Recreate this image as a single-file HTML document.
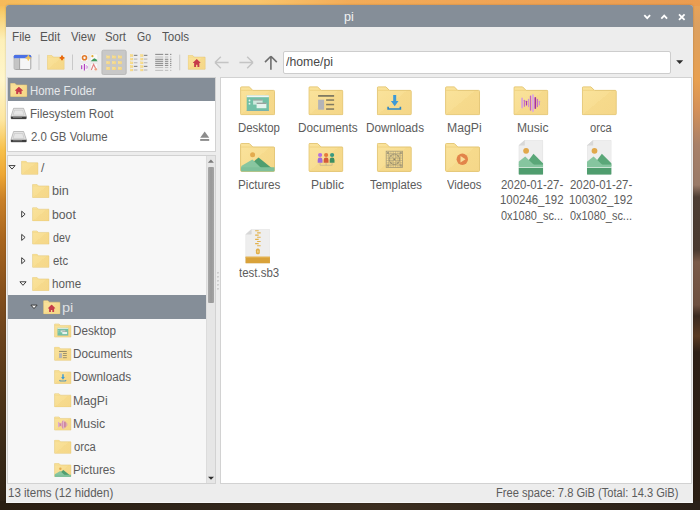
<!DOCTYPE html>
<html><head><meta charset="utf-8">
<style>
*{margin:0;padding:0;box-sizing:border-box}
html,body{width:700px;height:510px;overflow:hidden}
body{position:relative;font-family:"Liberation Sans",sans-serif;font-size:12px;color:#4a4a4a;background:#2a1e16}
.a{position:absolute}
.t{position:absolute;white-space:nowrap;line-height:1}
svg{position:absolute;overflow:visible}
#bg{position:absolute;left:0;top:0;width:700px;height:510px;background:#2c2117}
#bgL{position:absolute;left:0;top:0;width:8px;height:510px;background:linear-gradient(180deg,#f2b04e 0px,#f8cc6a 12px,#fdf0b8 40px,#fff6cc 80px,#fde6a0 120px,#f7c04a 150px,#eda633 175px,#c98028 200px,#a8651e 240px,#86501c 290px,#6a421c 340px,#4e3418 400px,#3a2a18 450px,#2c2014 510px)}
#bgR{position:absolute;left:692px;top:0;width:8px;height:510px;background:linear-gradient(180deg,#eda455 0px,#dca060 25px,#e8a050 80px,#d49058 110px,#a88068 145px,#9a7a68 185px,#4e3e34 197px,#4a3a30 250px,#7a5a48 262px,#6e5040 305px,#3a2a20 316px,#5a3a22 336px,#2e2016 352px,#2a1e14 510px)}
#bgT{position:absolute;left:0;top:0;width:700px;height:6px;background:linear-gradient(90deg,#f6ba5a 0px,#fac76c 150px,#f9c46a 260px,#f3ac58 350px,#f0a455 500px,#eb9c50 700px)}
#bgB{position:absolute;left:0;top:501px;width:700px;height:9px;background:linear-gradient(90deg,#2a1e12 0px,#30251a 200px,#3c2e20 380px,#34281c 500px,#2a2018 700px)}
#win{position:absolute;left:6px;top:5px;width:687px;height:497.7px;border-bottom:1px solid #f6f6f6;background:#ededed;border-radius:3px 3px 0 0;overflow:hidden;box-shadow:0 0 2px rgba(0,0,0,.25)}
#title{position:absolute;left:6px;top:5px;width:687px;height:22px;background:#858e98;border-radius:3px 3px 0 0}
.menu{font-size:13px;color:#3e3e3e;top:31px;letter-spacing:-0.3px}
.sep{position:absolute;width:1px;background:#c4c4c4}
#places{position:absolute;left:7px;top:77px;width:209px;height:75px;background:#fff;border:1px solid #d2d2d2}
#tree{position:absolute;left:7px;top:155px;width:209px;height:329px;background:#f7f7f7;border:1px solid #d2d2d2}
#files{position:absolute;left:220px;top:77px;width:472px;height:407px;background:#fff;border:1px solid #d2d2d2}
.pl{font-size:12.5px;color:#454545;letter-spacing:-0.2px}
.tr{font-size:12.5px;color:#454545;letter-spacing:-0.2px}
.fl{font-size:12.5px;color:#4a4a4a;letter-spacing:-0.35px;text-align:center;width:68px}
.st{font-size:12.5px;color:#454545;letter-spacing:-0.2px;top:487px}
</style></head><body>
<div id="bg"></div><div id="bgL"></div><div id="bgR"></div><div id="bgT"></div><div id="bgB"></div>
<div id="win"></div>
<div id="title"></div>
<!-- window buttons -->
<svg style="left:0;top:0" width="700" height="30">
 <path d="M644.3 15.2l2.9 3 2.9-3" fill="none" stroke="#fff" stroke-width="1.8"/>
 <path d="M661.3 18.6l2.9-3 2.9 3" fill="none" stroke="#fff" stroke-width="1.8"/>
 <path d="M679 14.3l5.6 5.6M684.6 14.3l-5.6 5.6" fill="none" stroke="#fff" stroke-width="1.8"/>
</svg>
<!-- menu -->

<svg width="0" height="0" style="position:absolute">
 <defs>
  <linearGradient id="fg" x1="0" y1="0" x2="1" y2="1">
   <stop offset="0" stop-color="#fae39c"/><stop offset="0.5" stop-color="#f8de93"/><stop offset="0.5" stop-color="#f6da8c"/><stop offset="1" stop-color="#f5d789"/>
  </linearGradient>
  <symbol id="folder" viewBox="0 0 35 29">
   <path d="M1.5 .5h7.6l3.6 3.6h20.8a1 1 0 0 1 1 1v22.4a1 1 0 0 1-1 1H1.5a1 1 0 0 1-1-1V1.5a1 1 0 0 1 1-1z" fill="url(#fg)" stroke="#e3c573" stroke-width="1"/>
   <path d="M1 4.1h11.7" stroke="#efd07e" stroke-width=".8"/>
  </symbol>
  <symbol id="house" viewBox="0 0 10 10" preserveAspectRatio="none">
   <path d="M5 0L-.3 5.1h2V10h2.4V7.2h1.8V10h2.4V5.1h2z" fill="#c63c4a"/>
  </symbol>

  <symbol id="ov_desktop" viewBox="0 0 35 29">
   <rect x="6.6" y="9" width="22.2" height="15.3" fill="#73c0a6"/>
   <rect x="6.6" y="9" width="22.2" height="1.9" fill="#f2f6f4"/>
   <circle cx="9.4" cy="14.2" r=".9" fill="#e8f4ee"/><circle cx="9.4" cy="17.4" r=".9" fill="#e8f4ee"/>
   <rect x="13" y="13.3" width="9.5" height="5" fill="#cfe9de"/><rect x="13" y="13.3" width="9.5" height=".8" fill="#808080"/>
   <rect x="16.5" y="16.5" width="9.8" height="5.4" fill="#e6f4ee"/><rect x="16.5" y="16.5" width="9.8" height=".8" fill="#6a6a6a"/>
   <rect x="6.6" y="23.8" width="22.2" height=".5" fill="#4a9ac0"/>
  </symbol>
  <symbol id="ov_documents" viewBox="0 0 35 29">
   <rect x="9.7" y="8.7" width="16" height="1.8" fill="#807a62"/>
   <rect x="9.7" y="13.4" width="6" height="10" fill="#b3b4b8"/>
   <rect x="17.7" y="13" width="8" height="1.5" fill="#807a62"/>
   <rect x="17.7" y="17.5" width="8" height="1.5" fill="#807a62"/>
   <rect x="17.7" y="22" width="8" height="1.5" fill="#807a62"/>
  </symbol>
  <symbol id="ov_downloads" viewBox="0 0 35 29">
   <path d="M16.4 8.7h3v6h2.3l-3.8 5.2-3.8-5.2h2.3z" fill="#3d9ad6"/>
   <path d="M11.3 20.5v2.2h12.3v-2.2" fill="none" stroke="#2a86c6" stroke-width="1.6"/>
  </symbol>
  <symbol id="ov_music" viewBox="0 0 35 29">
   <g stroke-linecap="round">
   <path d="M8.7 12.2v9" stroke="#d8a2d8" stroke-width="1.8"/>
   <path d="M11 14v5.9" stroke="#c270c8" stroke-width="1.3"/>
   <path d="M13.1 15v3.6" stroke="#ad3cad" stroke-width="1.3"/>
   <path d="M15.1 13.1v7.2" stroke="#d090d8" stroke-width="1.2"/>
   <path d="M17.1 9.8v13.9" stroke="#c262c2" stroke-width="1.3"/>
   <path d="M19.5 9v15.6" stroke="#dcaadc" stroke-width="2.1"/>
   <path d="M21.9 11.5v10.4" stroke="#a62ea6" stroke-width="1.6"/>
   <path d="M24 13.1v7.2" stroke="#c270c8" stroke-width="1.3"/>
   <path d="M26 15v3.5" stroke="#d090d8" stroke-width="1.2"/>
   </g>
  </symbol>
  <symbol id="ov_pictures" viewBox="0 0 35 29">
   <circle cx="12.5" cy="11.9" r="2.5" fill="#e3ab4e"/>
   <path d="M18.5 14.6L31.5 25H6z" fill="#4f9e70"/>
   <path d="M12.3 16.6L21 25H1.2v-2z" fill="#88c6a0"/>
   <path d="M.8 24.3h33.6v3.4a1 1 0 0 1-1 1H1.8a1 1 0 0 1-1-1z" fill="#7ec09a"/>
  </symbol>
  <symbol id="ov_public" viewBox="0 0 35 29">
   <path d="M11.7 19.8v2.6h12v-2.6M17.7 19.8v2.6" fill="none" stroke="#bfb290" stroke-width=".7"/>
   <circle cx="11.7" cy="12.1" r="2.1" fill="#b46ee0"/><path d="M9.3 19.9v-2.8a2.4 2.4 0 0 1 4.8 0v2.8z" fill="#a06ad8"/>
   <circle cx="17.7" cy="12.1" r="2.1" fill="#e67a3a"/><path d="M15.3 19.9v-2.8a2.4 2.4 0 0 1 4.8 0v2.8z" fill="#d45a38"/>
   <circle cx="23.7" cy="12.1" r="2.1" fill="#3a9a80"/><path d="M21.3 19.9v-2.8a2.4 2.4 0 0 1 4.8 0v2.8z" fill="#3d8e60"/>
  </symbol>
  <symbol id="ov_templates" viewBox="0 0 35 29">
   <g opacity=".75">
   <rect x="9.4" y="8.3" width="16.4" height="16.2" fill="none" stroke="#8a8470" stroke-width=".8"/>
   <path d="M11.8 8.3v16.2M14.1 8.3v16.2M16.4 8.3v16.2M18.8 8.3v16.2M21.1 8.3v16.2M23.4 8.3v16.2M9.4 10.6h16.4M9.4 12.9h16.4M9.4 15.2h16.4M9.4 17.6h16.4M9.4 19.9h16.4M9.4 22.2h16.4" stroke="#8f8a74" stroke-width=".55"/>
   <circle cx="17.6" cy="16.4" r="5.2" fill="none" stroke="#7a7562" stroke-width=".9"/>
   <path d="M9.6 8.5l16 15.8M25.6 8.5L9.6 24.3" stroke="#8a8470" stroke-width=".5"/>
   <circle cx="17.6" cy="16.4" r=".9" fill="#6a6552"/>
   <rect x="10.3" y="9.2" width="2" height="2" fill="#8a8470"/><rect x="22.9" y="9.2" width="2" height="2" fill="#8a8470"/>
   <rect x="10.3" y="21.5" width="2" height="2" fill="#8a8470"/><rect x="22.9" y="21.5" width="2" height="2" fill="#8a8470"/>
   </g>
  </symbol>
  <symbol id="ov_videos" viewBox="0 0 35 29">
   <circle cx="17.2" cy="16.4" r="5.7" fill="#e2844a"/>
   <path d="M15.4 13.2v6.4l5-3.2z" fill="#f8dd9a"/>
  </symbol>
  <symbol id="imgfile" viewBox="0 0 24.7 34.8">
   <path d="M6.3 .25H24a.45.45 0 0 1 .45.45v33.4a.45.45 0 0 1-.45.45H.7a.45.45 0 0 1-.45-.45V5.6z" fill="#eeeeee" stroke="#dcdcdc" stroke-width=".5"/>
   <path d="M6.3 0v4.9a.7.7 0 0 1-.7.7H0z" fill="#d8d8d8"/>
   <circle cx="7.6" cy="10.8" r="2.9" fill="#e1a84b"/>
   <path d="M15 13.8l9.7 9.6v2.4H6z" fill="#5aa778"/>
   <path d="M6.7 16.4L15.6 25H0v-3.3z" fill="#86c59f"/>
   <rect x="0" y="24.6" width="24.7" height="2.6" fill="#86c59f"/>
   <rect x="0" y="27.2" width="24.7" height=".8" fill="#c6e4d0"/>
   <path d="M0 28h24.7v6.1a.7.7 0 0 1-.7.7H.7a.7.7 0 0 1-.7-.7z" fill="#4f9d6e"/>
  </symbol>
  <symbol id="zipfile" viewBox="0 0 24.7 34.8">
   <path d="M6.3 .25H24a.45.45 0 0 1 .45.45v33.4a.45.45 0 0 1-.45.45H.7a.45.45 0 0 1-.45-.45V5.6z" fill="#eeeeee" stroke="#dedede" stroke-width=".5"/>
   <path d="M6.3 .25v4.7a.7.7 0 0 1-.7.7H.25z" fill="#d6d6d6"/>
   <path d="M0 27.9h24.7v6.2a.7.7 0 0 1-.7.7H.7a.7.7 0 0 1-.7-.7z" fill="#d9a23a"/>
   <rect x="0" y="27.9" width="24.7" height="1" fill="#e6b652"/>
   <path d="M9.8 1.90h3.6M11.8 4.05h3.6M9.8 6.20h3.6M11.8 8.35h3.6M9.8 10.50h3.6M11.8 12.65h3.6M9.8 14.80h3.6M11.8 16.95h3.6" stroke="#e2b24e" stroke-width="1.15"/>
   <rect x="10.6" y="19.7" width="3.9" height="5.8" rx="1.6" fill="#e0ae48"/>
   <rect x="11.8" y="21.6" width="1.5" height="2.2" fill="#f2d48a"/>
  </symbol>
 </defs>
</svg>

<!-- toolbar -->
<svg style="left:0;top:48px" width="700" height="30">
 <!-- new window icon 14-31.4, 55-69.7 -->
 <g transform="translate(0,-48)">
  <rect x="14.2" y="55.2" width="16.6" height="14.3" rx="1.3" fill="#f6f6f6" stroke="#9c9c9c" stroke-width=".9"/>
  <rect x="14.6" y="58.2" width="4.9" height="10.9" fill="#c4c4c4"/>
  <path d="M19.6 58.2v10.9" stroke="#9a9a9a" stroke-width=".9"/>
  <path d="M13.8 58.2v-1.9a1.4 1.4 0 0 1 1.4-1.4h14.6a1.4 1.4 0 0 1 1.4 1.4v1.9z" fill="#4a70e6"/>
  <path d="M28.3 55.1l.9 1.9 1.9.9-1.9.9-.9 1.9-.9-1.9-1.9-.9 1.9-.9z" fill="#f2c55a" stroke="#f2c55a" stroke-width=".6" stroke-linejoin="round"/>
  <rect x="38.5" y="54.5" width="1" height="15.5" fill="#c9c9c9"/>
  <use href="#folder" x="47" y="55" width="17.6" height="14.7"/>
  <path d="M62 55.6v4.6M59.7 57.9h4.6" stroke="#e8680e" stroke-width="1.9"/>
  <rect x="72" y="54.5" width="1" height="15.5" fill="#c9c9c9"/>
  <!-- small icons grid -->
  <rect x="80.6" y="54" width="7.4" height="7.6" rx="1.2" fill="#f9f9f9" stroke="#e2e2e2" stroke-width=".5"/>
  <circle cx="84.5" cy="57.8" r="2" fill="none" stroke="#e27a2a" stroke-width="1.6"/>
  <rect x="90.3" y="54" width="7.4" height="7.6" rx="1.2" fill="#f9f9f9" stroke="#e2e2e2" stroke-width=".5"/>
  <circle cx="92.4" cy="56.2" r="1.1" fill="#e2aa30"/>
  <path d="M90.7 61.3l2.4-2.2 1.4-.9 1.6 1 1.5 2.1z" fill="#3f9a5e"/>
  <rect x="80.6" y="63.4" width="7.4" height="7.4" rx="1.2" fill="#f9f9f9" stroke="#e2e2e2" stroke-width=".5"/>
  <path d="M81.7 65.2v4M84.4 63.9v6.6" stroke="#b040c0" stroke-width="1.2"/>
  <path d="M86.2 65v4.2M87.4 66v2.4" stroke="#d8a0e0" stroke-width="1"/>
  <rect x="90.3" y="63.4" width="7.4" height="7.4" rx="1.2" fill="#f9f9f9" stroke="#e2e2e2" stroke-width=".5"/>
  <path d="M91.3 70l2.3-5.6 2.3 4.6" fill="none" stroke="#e08080" stroke-width="1.1"/>
  <circle cx="95.8" cy="69.3" r="1.3" fill="#f0a080"/>
  <!-- pressed -->
  <rect x="101.9" y="50.2" width="24.3" height="24.3" rx="1.5" fill="#c8c8c8" stroke="#b4b4b4" stroke-width=".8"/>
 </g>
</svg>

<svg style="left:0;top:0" width="700" height="80">
  <!-- 3x3 grid icons -->
  <g id="g9"><use href="#folder" x="106.1" y="54.8" width="4.1" height="4.1" preserveAspectRatio="none"/><use href="#folder" x="112.0" y="54.8" width="4.1" height="4.1" preserveAspectRatio="none"/><use href="#folder" x="117.9" y="54.8" width="4.1" height="4.1" preserveAspectRatio="none"/><use href="#folder" x="106.1" y="60.5" width="4.1" height="4.1" preserveAspectRatio="none"/><use href="#folder" x="112.0" y="60.5" width="4.1" height="4.1" preserveAspectRatio="none"/><use href="#folder" x="117.9" y="60.5" width="4.1" height="4.1" preserveAspectRatio="none"/><use href="#folder" x="106.1" y="66.2" width="4.1" height="4.1" preserveAspectRatio="none"/><use href="#folder" x="112.0" y="66.2" width="4.1" height="4.1" preserveAspectRatio="none"/><use href="#folder" x="117.9" y="66.2" width="4.1" height="4.1" preserveAspectRatio="none"/></g>
  <!-- compact list -->
  <use href="#folder" x="129.9" y="53.8" width="3.4" height="3.1"/>
  <rect x="133.9" y="54.8" width="3.5" height="1.2" fill="#8c8c8c"/>
  <use href="#folder" x="129.9" y="57.5" width="3.4" height="3.1"/>
  <rect x="133.9" y="58.5" width="3.5" height="1.2" fill="#bdbdbd"/>
  <use href="#folder" x="129.9" y="61.1" width="3.4" height="3.1"/>
  <rect x="133.9" y="62.1" width="3.5" height="1.2" fill="#bdbdbd"/>
  <use href="#folder" x="129.9" y="64.8" width="3.4" height="3.1"/>
  <rect x="133.9" y="65.8" width="3.5" height="1.2" fill="#8c8c8c"/>
  <use href="#folder" x="129.9" y="68.4" width="3.4" height="3.1"/>
  <rect x="133.9" y="69.4" width="3.5" height="1.2" fill="#bdbdbd"/>
  <use href="#folder" x="140.1" y="53.8" width="3.4" height="3.1"/>
  <rect x="143.9" y="54.8" width="3.5" height="1.2" fill="#8c8c8c"/>
  <use href="#folder" x="140.1" y="57.5" width="3.4" height="3.1"/>
  <rect x="143.9" y="58.5" width="3.5" height="1.2" fill="#bdbdbd"/>
  <use href="#folder" x="140.1" y="61.1" width="3.4" height="3.1"/>
  <rect x="143.9" y="62.1" width="3.5" height="1.2" fill="#bdbdbd"/>
  <use href="#folder" x="140.1" y="64.8" width="3.4" height="3.1"/>
  <rect x="143.9" y="65.8" width="3.5" height="1.2" fill="#8c8c8c"/>
  <use href="#folder" x="140.1" y="68.4" width="3.4" height="3.1"/>
  <rect x="143.9" y="69.4" width="3.5" height="1.2" fill="#bdbdbd"/>
  <!-- detailed list -->
  <rect x="155.2" y="53.85" width="8" height="1.1" fill="#8e8e8e"/><rect x="164.9" y="53.85" width="3.4" height="1.1" fill="#8e8e8e"/><rect x="170" y="53.85" width="1.4" height="1.1" fill="#8e8e8e"/>
  <rect x="155.2" y="56.45" width="8" height="1.1" fill="#c2c2c2"/><rect x="164.9" y="56.45" width="3.4" height="1.1" fill="#c2c2c2"/><rect x="170" y="56.45" width="1.4" height="1.1" fill="#c2c2c2"/>
  <rect x="155.2" y="58.75" width="8" height="1.1" fill="#8e8e8e"/><rect x="164.9" y="58.75" width="3.4" height="1.1" fill="#8e8e8e"/><rect x="170" y="58.75" width="1.4" height="1.1" fill="#8e8e8e"/>
  <rect x="155.2" y="60.75" width="8" height="1.1" fill="#8e8e8e"/><rect x="164.9" y="60.75" width="3.4" height="1.1" fill="#8e8e8e"/><rect x="170" y="60.75" width="1.4" height="1.1" fill="#8e8e8e"/>
  <rect x="155.2" y="62.85" width="8" height="1.1" fill="#8e8e8e"/><rect x="164.9" y="62.85" width="3.4" height="1.1" fill="#8e8e8e"/><rect x="170" y="62.85" width="1.4" height="1.1" fill="#8e8e8e"/>
  <rect x="155.2" y="64.85" width="8" height="1.1" fill="#8e8e8e"/><rect x="164.9" y="64.85" width="3.4" height="1.1" fill="#8e8e8e"/><rect x="170" y="64.85" width="1.4" height="1.1" fill="#8e8e8e"/>
  <rect x="155.2" y="66.95" width="8" height="1.1" fill="#c2c2c2"/><rect x="164.9" y="66.95" width="3.4" height="1.1" fill="#c2c2c2"/><rect x="170" y="66.95" width="1.4" height="1.1" fill="#c2c2c2"/>
  <rect x="155.2" y="69.85" width="8" height="1.1" fill="#c2c2c2"/><rect x="164.9" y="69.85" width="3.4" height="1.1" fill="#c2c2c2"/><rect x="170" y="69.85" width="1.4" height="1.1" fill="#c2c2c2"/>
  <rect x="179.2" y="54.6" width="1" height="15.7" fill="#c9c9c9"/>
  <use href="#folder" x="187.7" y="55" width="18" height="14.7"/>
  <use href="#house" x="192.8" y="59.1" width="7.9" height="7.8"/>
  <!-- back/forward/up -->
  <path d="M215 62.5h13.6M215 62.5l5.8-5.8M215 62.5l5.8 5.8" fill="none" stroke="#c4c4c4" stroke-width="1.5"/>
  <path d="M253 62.5h-13.6M253 62.5l-5.8-5.8M253 62.5l-5.8 5.8" fill="none" stroke="#c4c4c4" stroke-width="1.5"/>
  <path d="M270.9 56.2v13.5M270.9 56.2l-5.9 5.9M270.9 56.2l5.9 5.9" fill="none" stroke="#6e6e6e" stroke-width="1.6"/>
  <!-- address -->
  <rect x="283.5" y="51.5" width="387" height="22" rx="1.5" fill="#fff" stroke="#cdcdcd" stroke-width="1"/>
  <path d="M676.2 60.3h7l-3.5 3.7z" fill="#2d2d2d"/>
</svg>

<div id="places"></div>
<div class="a" style="left:8px;top:78px;width:207px;height:23.3px;background:#858e98"></div>
<svg style="left:0;top:0" width="220" height="160">
  <use href="#folder" x="10" y="82.9" width="17.5" height="14"/>
  <use href="#house" x="14.8" y="86.8" width="8.2" height="7.5"/>
  <g id="drive">
   <path d="M13.6 108.3h10l2.9 8.5v1.3a.8.8 0 0 1-.8.8H11.7a.8.8 0 0 1-.8-.8v-1.3z" fill="#e6e6e6" stroke="#9a9a9a" stroke-width=".6"/>
   <path d="M14.6 110.2h8l1.6 5H13z" fill="none" stroke="#b8b8b8" stroke-width=".5"/>
   <path d="M11 116.6h15.4v1.6a.7.7 0 0 1-.7.7H11.7a.7.7 0 0 1-.7-.7z" fill="#3e3e3e"/>
   <path d="M13 117.3h9v.7h-9z" fill="#8a8a8a"/>
  </g>
  <use href="#drive" y="23.2"/>
  <path d="M200.2 137.8l4.5-6.3 4.5 6.3z" fill="#8c8c8c"/>
  <rect x="200.2" y="139" width="9" height="1.9" fill="#8c8c8c"/>
</svg>

<div id="tree"></div>
<div class="a" style="left:8px;top:295.3px;width:198px;height:23.4px;background:#858e98"></div>
<div class="a" style="left:206px;top:156px;width:9px;height:327px;background:#e6e6e6;border-left:1px solid #dcdcdc"></div>
<div class="a" style="left:208.2px;top:167px;width:5.6px;height:135.7px;background:linear-gradient(90deg,#a8a8a8,#999 50%,#a4a4a4);border-radius:1px"></div>
<svg style="left:0;top:0" width="220" height="490">
  <path d="M207.9 162.7l3-3.3 3 3.3z" fill="#7a7a7a"/>
  <path d="M208 476.7h6l-3 3.1z" fill="#2e2e2e"/>

<path d="M8.9 165.6h6.2l-3.1 3.5z" fill="#fff" stroke="#333" stroke-width=".95" stroke-linejoin="round"/>
<use href="#folder" x="21" y="160.70" width="17.6" height="14.1"/>
<use href="#folder" x="32" y="183.95" width="17.6" height="14.1"/>
<path d="M21.7 211.2v6l3.4-3z" fill="#fff" stroke="#333" stroke-width=".95" stroke-linejoin="round"/>
<use href="#folder" x="32" y="207.20" width="17.6" height="14.1"/>
<path d="M21.7 234.4v6l3.4-3z" fill="#fff" stroke="#333" stroke-width=".95" stroke-linejoin="round"/>
<use href="#folder" x="32" y="230.45" width="17.6" height="14.1"/>
<path d="M21.7 257.7v6l3.4-3z" fill="#fff" stroke="#333" stroke-width=".95" stroke-linejoin="round"/>
<use href="#folder" x="32" y="253.70" width="17.6" height="14.1"/>
<path d="M19.9 281.8h6.2l-3.1 3.5z" fill="#fff" stroke="#333" stroke-width=".95" stroke-linejoin="round"/>
<use href="#folder" x="32" y="276.95" width="17.6" height="14.1"/>
<path d="M30.9 305.1h6.2l-3.1 3.5z" fill="#fff" stroke="#333" stroke-width=".95" stroke-linejoin="round"/>
<use href="#folder" x="43" y="300.20" width="17.6" height="14.1"/>
<use href="#house" x="47.8" y="304.50" width="7.6" height="7.6"/>
<use href="#folder" x="54" y="323.45" width="17.6" height="14.1"/>
<use href="#ov_desktop" x="54" y="323.45" width="17.6" height="14.1"/>
<use href="#folder" x="54" y="346.70" width="17.6" height="14.1"/>
<use href="#ov_documents" x="54" y="346.70" width="17.6" height="14.1"/>
<use href="#folder" x="54" y="369.95" width="17.6" height="14.1"/>
<use href="#ov_downloads" x="54" y="369.95" width="17.6" height="14.1"/>
<use href="#folder" x="54" y="393.20" width="17.6" height="14.1"/>
<use href="#folder" x="54" y="416.45" width="17.6" height="14.1"/>
<use href="#ov_music" x="54" y="416.45" width="17.6" height="14.1"/>
<use href="#folder" x="54" y="439.70" width="17.6" height="14.1"/>
<use href="#folder" x="54" y="462.95" width="17.6" height="14.1"/>
<use href="#ov_pictures" x="54" y="462.95" width="17.6" height="14.1"/>
</svg>
<div id="files"></div>
<svg style="left:0;top:0" width="700" height="300">
<use href="#folder" x="240.1" y="86.3" width="35" height="29"/>
<use href="#ov_desktop" x="240.1" y="86.3" width="35" height="29"/>
<use href="#folder" x="308.4" y="86.3" width="35" height="29"/>
<use href="#ov_documents" x="308.4" y="86.3" width="35" height="29"/>
<use href="#folder" x="376.8" y="86.3" width="35" height="29"/>
<use href="#ov_downloads" x="376.8" y="86.3" width="35" height="29"/>
<use href="#folder" x="445.1" y="86.3" width="35" height="29"/>
<use href="#folder" x="513.4" y="86.3" width="35" height="29"/>
<use href="#ov_music" x="513.4" y="86.3" width="35" height="29"/>
<use href="#folder" x="581.8" y="86.3" width="35" height="29"/>
<use href="#folder" x="240.1" y="142.9" width="35" height="29"/>
<use href="#ov_pictures" x="240.1" y="142.9" width="35" height="29"/>
<use href="#folder" x="308.4" y="142.9" width="35" height="29"/>
<use href="#ov_public" x="308.4" y="142.9" width="35" height="29"/>
<use href="#folder" x="376.8" y="142.9" width="35" height="29"/>
<use href="#ov_templates" x="376.8" y="142.9" width="35" height="29"/>
<use href="#folder" x="445.1" y="142.9" width="35" height="29"/>
<use href="#ov_videos" x="445.1" y="142.9" width="35" height="29"/>
<use href="#imgfile" x="518.5" y="140" width="24.7" height="34.8"/>
<use href="#imgfile" x="586.9" y="140" width="24.7" height="34.8"/>
<use href="#zipfile" x="245.3" y="228.9" width="24.7" height="34.7"/>
</svg>
<svg style="left:0;top:0" width="230" height="300"><rect x="217.2" y="272.2" width="1.3" height="1" fill="#cdcdcd"/><rect x="217.2" y="276.2" width="1.3" height="1" fill="#cdcdcd"/><rect x="217.2" y="280.2" width="1.3" height="1" fill="#cdcdcd"/><rect x="217.2" y="284.2" width="1.3" height="1" fill="#cdcdcd"/><rect x="217.2" y="288.2" width="1.3" height="1" fill="#cdcdcd"/></svg>
<!--TEXT-->
<svg style="left:0;top:0" width="230" height="300"><rect x="217.2" y="272.2" width="1.3" height="1" fill="#cdcdcd"/><rect x="217.2" y="276.2" width="1.3" height="1" fill="#cdcdcd"/><rect x="217.2" y="280.2" width="1.3" height="1" fill="#cdcdcd"/><rect x="217.2" y="284.2" width="1.3" height="1" fill="#cdcdcd"/><rect x="217.2" y="288.2" width="1.3" height="1" fill="#cdcdcd"/></svg>
<!--TEXT-->
<svg style="left:0;top:0" width="230" height="300"><rect x="217.2" y="272.2" width="1.3" height="1" fill="#cdcdcd"/><rect x="217.2" y="276.2" width="1.3" height="1" fill="#cdcdcd"/><rect x="217.2" y="280.2" width="1.3" height="1" fill="#cdcdcd"/><rect x="217.2" y="284.2" width="1.3" height="1" fill="#cdcdcd"/><rect x="217.2" y="288.2" width="1.3" height="1" fill="#cdcdcd"/></svg>
<!--TEXT-->
<svg style="left:0;top:0" width="230" height="300"><rect x="217.2" y="272.2" width="1.3" height="1" fill="#cdcdcd"/><rect x="217.2" y="276.2" width="1.3" height="1" fill="#cdcdcd"/><rect x="217.2" y="280.2" width="1.3" height="1" fill="#cdcdcd"/><rect x="217.2" y="284.2" width="1.3" height="1" fill="#cdcdcd"/><rect x="217.2" y="288.2" width="1.3" height="1" fill="#cdcdcd"/></svg>
<!--TEXT-->
<svg style="left:0;top:0" width="230" height="300"><rect x="217.2" y="272.2" width="1.3" height="1" fill="#cdcdcd"/><rect x="217.2" y="276.2" width="1.3" height="1" fill="#cdcdcd"/><rect x="217.2" y="280.2" width="1.3" height="1" fill="#cdcdcd"/><rect x="217.2" y="284.2" width="1.3" height="1" fill="#cdcdcd"/><rect x="217.2" y="288.2" width="1.3" height="1" fill="#cdcdcd"/></svg>
<!--TEXT-->
<!--TEXT-->
<!--TEXT-->
<!--TEXT-->
<!--TEXT-->
<div class="t" style="left:344.03px;top:10.10px;font-size:13px;transform:scaleX(0.9667);transform-origin:0 0;color:#f2f2f2">pi</div>
<div class="t" style="left:12.03px;top:30.37px;font-size:13.5px;transform:scaleX(0.8667);transform-origin:0 0;color:#555555">File</div>
<div class="t" style="left:40.03px;top:30.37px;font-size:13.5px;transform:scaleX(0.8682);transform-origin:0 0;color:#555555">Edit</div>
<div class="t" style="left:70.60px;top:30.37px;font-size:13.5px;transform:scaleX(0.8379);transform-origin:0 0;color:#555555">View</div>
<div class="t" style="left:104.85px;top:30.37px;font-size:13.5px;transform:scaleX(0.8458);transform-origin:0 0;color:#555555">Sort</div>
<div class="t" style="left:136.60px;top:30.37px;font-size:13.5px;transform:scaleX(0.7778);transform-origin:0 0;color:#555555">Go</div>
<div class="t" style="left:162.00px;top:30.37px;font-size:13.5px;transform:scaleX(0.8581);transform-origin:0 0;color:#555555">Tools</div>
<div class="t" style="left:286.30px;top:55.19px;font-size:13.6px;transform:scaleX(0.9000);transform-origin:0 0;color:#474747">/home/pi</div>
<div class="t" style="left:30.17px;top:84.59px;font-size:12.3px;transform:scaleX(0.9271);transform-origin:0 0;color:#e6e8ea">Home Folder</div>
<div class="t" style="left:29.65px;top:107.89px;font-size:12.3px;transform:scaleX(0.9460);transform-origin:0 0;color:#5c5c5c">Filesystem Root</div>
<div class="t" style="left:30.60px;top:130.99px;font-size:12.3px;transform:scaleX(0.9268);transform-origin:0 0;color:#5c5c5c">2.0 GB Volume</div>
<div class="t" style="left:41.00px;top:162.19px;font-size:12.3px;transform:scaleX(1.0000);transform-origin:0 0;color:#5c5c5c">/</div>
<div class="t" style="left:51.77px;top:185.44px;font-size:12.3px;transform:scaleX(1.0267);transform-origin:0 0;color:#5c5c5c">bin</div>
<div class="t" style="left:51.80px;top:208.69px;font-size:12.3px;transform:scaleX(0.9957);transform-origin:0 0;color:#5c5c5c">boot</div>
<div class="t" style="left:52.80px;top:231.94px;font-size:12.3px;transform:scaleX(0.8700);transform-origin:0 0;color:#5c5c5c">dev</div>
<div class="t" style="left:52.80px;top:255.19px;font-size:12.3px;transform:scaleX(0.9188);transform-origin:0 0;color:#5c5c5c">etc</div>
<div class="t" style="left:51.85px;top:278.44px;font-size:12.3px;transform:scaleX(0.9467);transform-origin:0 0;color:#5c5c5c">home</div>
<div class="t" style="left:62.01px;top:301.69px;font-size:12.3px;transform:scaleX(1.1875);transform-origin:0 0;color:#dde0e3">pi</div>
<div class="t" style="left:73.35px;top:324.94px;font-size:12.3px;transform:scaleX(0.9523);transform-origin:0 0;color:#5c5c5c">Desktop</div>
<div class="t" style="left:73.35px;top:348.19px;font-size:12.3px;transform:scaleX(0.9541);transform-origin:0 0;color:#5c5c5c">Documents</div>
<div class="t" style="left:73.34px;top:371.44px;font-size:12.3px;transform:scaleX(0.9567);transform-origin:0 0;color:#5c5c5c">Downloads</div>
<div class="t" style="left:73.31px;top:394.69px;font-size:12.3px;transform:scaleX(0.9939);transform-origin:0 0;color:#5c5c5c">MagPi</div>
<div class="t" style="left:73.30px;top:417.94px;font-size:12.3px;transform:scaleX(1.0032);transform-origin:0 0;color:#5c5c5c">Music</div>
<div class="t" style="left:74.30px;top:441.19px;font-size:12.3px;transform:scaleX(0.9125);transform-origin:0 0;color:#5c5c5c">orca</div>
<div class="t" style="left:73.35px;top:464.44px;font-size:12.3px;transform:scaleX(0.9488);transform-origin:0 0;color:#5c5c5c">Pictures</div>
<div class="t" style="left:237.97px;top:121.89px;font-size:12.3px;transform:scaleX(0.9273);transform-origin:0 0;color:#5c5c5c">Desktop</div>
<div class="t" style="left:297.64px;top:121.89px;font-size:12.3px;transform:scaleX(0.9574);transform-origin:0 0;color:#5c5c5c">Documents</div>
<div class="t" style="left:366.45px;top:121.89px;font-size:12.3px;transform:scaleX(0.9533);transform-origin:0 0;color:#5c5c5c">Downloads</div>
<div class="t" style="left:446.91px;top:121.89px;font-size:12.3px;transform:scaleX(0.9939);transform-origin:0 0;color:#5c5c5c">MagPi</div>
<div class="t" style="left:516.92px;top:121.89px;font-size:12.3px;transform:scaleX(0.9839);transform-origin:0 0;color:#5c5c5c">Music</div>
<div class="t" style="left:589.90px;top:121.89px;font-size:12.3px;transform:scaleX(0.9042);transform-origin:0 0;color:#5c5c5c">orca</div>
<div class="t" style="left:238.35px;top:178.79px;font-size:12.3px;transform:scaleX(0.9512);transform-origin:0 0;color:#5c5c5c">Pictures</div>
<div class="t" style="left:311.12px;top:178.79px;font-size:12.3px;transform:scaleX(0.9844);transform-origin:0 0;color:#5c5c5c">Public</div>
<div class="t" style="left:370.20px;top:178.79px;font-size:12.3px;transform:scaleX(0.9286);transform-origin:0 0;color:#5c5c5c">Templates</div>
<div class="t" style="left:447.10px;top:178.79px;font-size:12.3px;transform:scaleX(0.9189);transform-origin:0 0;color:#5c5c5c">Videos</div>
<div class="t" style="left:501.40px;top:178.79px;font-size:12.3px;transform:scaleX(0.9284);transform-origin:0 0;color:#5c5c5c">2020-01-27-</div>
<div class="t" style="left:500.47px;top:194.39px;font-size:12.3px;transform:scaleX(0.9284);transform-origin:0 0;color:#5c5c5c">100246_192</div>
<div class="t" style="left:501.40px;top:209.99px;font-size:12.3px;transform:scaleX(0.8884);transform-origin:0 0;color:#5c5c5c">0x1080_sc...</div>
<div class="t" style="left:570.00px;top:178.79px;font-size:12.3px;transform:scaleX(0.9284);transform-origin:0 0;color:#5c5c5c">2020-01-27-</div>
<div class="t" style="left:569.07px;top:194.39px;font-size:12.3px;transform:scaleX(0.9284);transform-origin:0 0;color:#5c5c5c">100302_192</div>
<div class="t" style="left:570.00px;top:209.99px;font-size:12.3px;transform:scaleX(0.8884);transform-origin:0 0;color:#5c5c5c">0x1080_sc...</div>
<div class="t" style="left:239.10px;top:266.69px;font-size:12.3px;transform:scaleX(0.9326);transform-origin:0 0;color:#5c5c5c">test.sb3</div>
<div class="t" style="left:7.66px;top:487.09px;font-size:12.3px;transform:scaleX(0.9387);transform-origin:0 0;color:#5c5c5c">13 items (12 hidden)</div>
<div class="t" style="left:495.70px;top:487.09px;font-size:12.3px;transform:scaleX(0.9050);transform-origin:0 0;color:#5c5c5c">Free space: 7.8 GiB (Total: 14.3 GiB)</div>
</body></html>
